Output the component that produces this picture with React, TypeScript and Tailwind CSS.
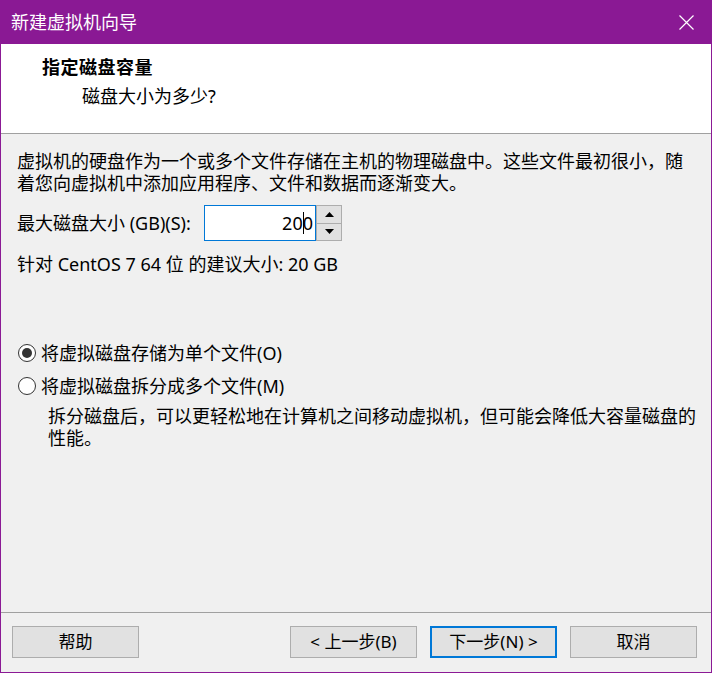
import React from 'react';

const FONT = { fontFamily: '"Segoe UI", "Noto Sans", "Microsoft YaHei", "Noto Sans CJK SC", sans-serif' };

const Radio = ({ checked, label }: { checked?: boolean; label: string }) => (
    <div className="flex items-center h-[22px]">
        <div className="w-[18px] h-[18px] rounded-full border border-[#333] bg-white flex items-center justify-center ml-[1px]">
            {checked && <div className="w-[10px] h-[10px] rounded-full bg-[#333]" />}
        </div>
        <span className="ml-[5px]">{label}</span>
    </div>
);

const Button = ({ children, primary }: { children: React.ReactNode; primary?: boolean }) => (
    <div
        className={`w-[127px] h-[32px] flex items-center justify-center bg-[#e1e1e1] text-[17px] text-black ${primary ? 'border-2 border-[#0078d7]' : 'border border-[#adadad]'}`}
    >
        {children}
    </div>
);

export default function App() {
    return (
        <div style={FONT} className="w-[712px] h-[673px] flex flex-col bg-[#f0f0f0] border border-[#8b1a95] text-[18px] text-black">
            {/* title bar */}
            <div className="h-[44px] bg-[#8a1994] flex items-center justify-between pl-[11px] pr-[17px] text-white text-[18px] -mx-px -mt-px">
                <span>新建虚拟机向导</span>
                <svg width="15" height="15" viewBox="0 0 15 15" className="mr-[1px]">
                    <path d="M0.5 0.5 L14.5 14.5 M14.5 0.5 L0.5 14.5" stroke="white" strokeWidth="1.2" fill="none" />
                </svg>
            </div>

            {/* header */}
            <div className="h-[90px] bg-white border-b border-[#a0a0a0] pl-[41px] pt-[11px]">
                <div className="font-bold leading-[24px] tracking-[0.5px]">指定磁盘容量</div>
                <div className="pl-[40px] mt-[5px] leading-[24px]">磁盘大小为多少?</div>
            </div>

            {/* body */}
            <div className="flex-1 pl-[16px] pt-[16px]">
                <div className="leading-[22px]">
                    <div>虚拟机的硬盘作为一个或多个文件存储在主机的物理磁盘中。这些文件最初很小，随</div>
                    <div>着您向虚拟机中添加应用程序、文件和数据而逐渐变大。</div>
                </div>

                <div className="flex items-center mt-[11px] h-[36px]">
                    <span className="w-[187px]">最大磁盘大小 (GB)(S):</span>
                    <div className="w-[112px] h-[36px] bg-white border border-[#0078d7] flex items-center justify-end pr-[2px]">
                        <span className="relative">
                            200
                            <span className="absolute left-[21px] top-[2px] w-px h-[22px] bg-black" />
                        </span>
                    </div>
                    <div className="w-[26px] h-[36px] flex flex-col border border-[#adadad] bg-[#e1e1e1]">
                        <div className="flex-1 flex items-center justify-center border-b border-[#adadad]">
                            <svg width="9" height="5" viewBox="0 0 9 5"><path d="M4.5 0 L9 5 L0 5 Z" fill="black" /></svg>
                        </div>
                        <div className="flex-1 flex items-center justify-center">
                            <svg width="9" height="5" viewBox="0 0 9 5"><path d="M0 0 L9 0 L4.5 5 Z" fill="black" /></svg>
                        </div>
                    </div>
                </div>

                <div className="mt-[12px] leading-[22px]">针对 CentOS 7 64 位 的建议大小: 20 GB</div>

                <div className="mt-[67px] flex flex-col gap-[11px]">
                    <Radio checked label="将虚拟磁盘存储为单个文件(O)" />
                    <Radio label="将虚拟磁盘拆分成多个文件(M)" />
                </div>

                <div className="pl-[31px] mt-[8px] leading-[22px]">
                    <div>拆分磁盘后，可以更轻松地在计算机之间移动虚拟机，但可能会降低大容量磁盘的</div>
                    <div>性能。</div>
                </div>
            </div>

            {/* footer */}
            <div className="h-[60px] border-t border-[#a0a0a0] flex items-start pt-[13px] pl-[11px] pr-[14px]">
                <Button>帮助</Button>
                <div className="flex-1" />
                <div className="flex gap-[13px]">
                    <Button>&lt; 上一步(B)</Button>
                    <Button primary>下一步(N) &gt;</Button>
                    <Button>取消</Button>
                </div>
            </div>
        </div>
    );
}
